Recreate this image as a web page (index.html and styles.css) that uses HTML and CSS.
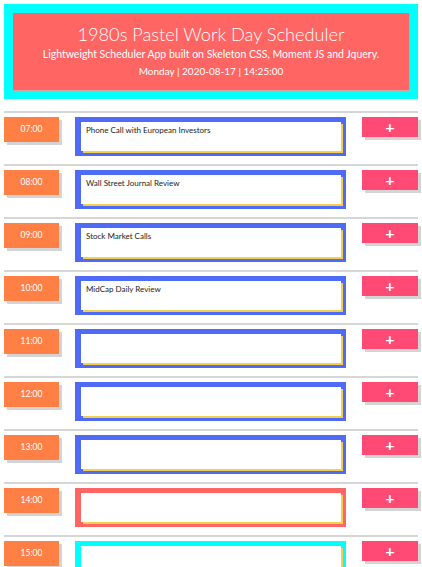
FILE: index.html
```html
<!DOCTYPE html>
<html>
<head>
<meta charset="utf-8">
<link rel="stylesheet" href="styles.css">
</head>
<body>
<div class="page">
  <header class="jumbo">
    <div class="jumbo-inner">
      <h1 class="title">1980s Pastel Work Day Scheduler</h1>
      <p class="lead">Lightweight Scheduler App built on Skeleton CSS, Moment JS and Jquery.</p>
      <p class="date">Monday | 2020-08-17 | 14:25:00</p>
    </div>
  </header>
  <main class="schedule">
    <div class="block"><div class="row"><div class="hour">07:00</div><div class="task past"><div class="note">Phone Call with European Investors</div></div><button class="save">+</button></div></div>
    <div class="block"><div class="row"><div class="hour">08:00</div><div class="task past"><div class="note">Wall Street Journal Review</div></div><button class="save">+</button></div></div>
    <div class="block"><div class="row"><div class="hour">09:00</div><div class="task past"><div class="note">Stock Market Calls</div></div><button class="save">+</button></div></div>
    <div class="block"><div class="row"><div class="hour">10:00</div><div class="task past"><div class="note">MidCap Daily Review</div></div><button class="save">+</button></div></div>
    <div class="block"><div class="row"><div class="hour">11:00</div><div class="task past"><div class="note"></div></div><button class="save">+</button></div></div>
    <div class="block"><div class="row"><div class="hour">12:00</div><div class="task past"><div class="note"></div></div><button class="save">+</button></div></div>
    <div class="block"><div class="row"><div class="hour">13:00</div><div class="task past"><div class="note"></div></div><button class="save">+</button></div></div>
    <div class="block"><div class="row"><div class="hour">14:00</div><div class="task present"><div class="note"></div></div><button class="save">+</button></div></div>
    <div class="block"><div class="row"><div class="hour">15:00</div><div class="task future"><div class="note"></div></div><button class="save">+</button></div></div>
  </main>
</div>
</body>
</html>
```
FILE: styles.css
```css
html, body {
  margin: 0;
  padding: 0;
  background: #fff;
}
body {
  font-family: Lato, "Noto Sans", sans-serif;
  color: #222;
}
.page {
  padding: 4px 4px 0 4px;
}
.jumbo {
  border: 9px solid #00ffff;
  background: #00ffff;
}
.jumbo-inner {
  background: #ff6663;
  height: 77px;
  box-sizing: border-box;
  padding-top: 9px;
  text-align: center;
  color: #fff;
  box-shadow: 1px 1px 0 #d9a0a0;
}
.title {
  margin: 0;
  font-size: 18.2px;
  font-weight: 300;
  line-height: 24px;
}
.lead {
  margin: 0;
  font-size: 10.5px;
  font-weight: 400;
  line-height: 17px;
}
.date {
  margin: 0;
  font-size: 10px;
  font-weight: 400;
  line-height: 17px;
}
.schedule {
  margin-top: 12px;
}
.block {
  border-top: 2px solid #d6d6d6;
  padding: 4px 0 8px 0;
}
.row {
  display: flex;
  align-items: flex-start;
}
.hour {
  width: 55px;
  height: 25px;
  flex: none;
  background: #ff7f45;
  color: #fff;
  font-size: 8.5px;
  line-height: 25px;
  text-align: center;
  box-shadow: 3px 3px 0 #d4d4d4;
}
.task {
  flex: none;
  width: 271px;
  height: 39px;
  margin-left: 16px;
  box-sizing: border-box;
  padding: 5px 5px 5px 6px;
}
.task.past { background: #4f6bf5; }
.task.present { background: #ff6663; }
.task.future { background: #00ffff; }
.note {
  background: #fff;
  height: 100%;
  box-sizing: border-box;
  box-shadow: 2px 2px 0 #f2cf4c;
  padding: 3px 4px 0 5px;
  font-size: 8px;
  line-height: 10px;
  color: #222;
}
.save {
  flex: none;
  width: 56px;
  height: 20px;
  margin-left: 16px;
  padding: 0;
  border: none;
  background: #ff4a76;
  color: #fff;
  font-family: Lato, "Noto Sans", sans-serif;
  font-size: 16px;
  font-weight: 700;
  line-height: 18px;
  box-shadow: 3px 3px 0 #d4d4d4;
}
```
